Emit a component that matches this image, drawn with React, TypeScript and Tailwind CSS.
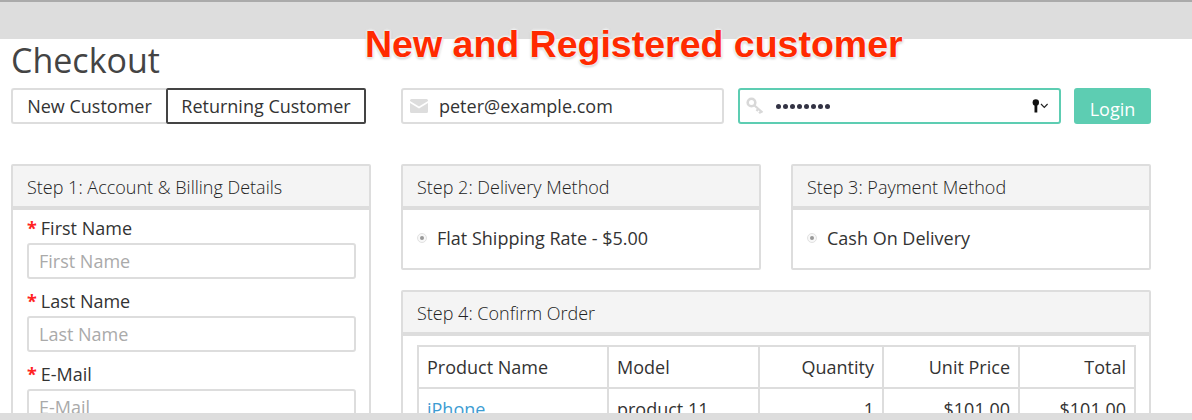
import React from "react";

function Panel({ title, children, className = "" }: { title: string; children: React.ReactNode; className?: string }) {
  return (
    <div className={`border-2 border-[#dddddd] rounded-[2px] ${className}`}>
      <div className="h-[44px] bg-[#f4f4f4] border-b-[4px] border-[#dddddd] pl-[14px] pt-[2px] flex items-center text-[18px] font-light text-[#222222] leading-none">
        {title}
      </div>
      {children}
    </div>
  );
}

function Field({ label }: { label: string }) {
  return (
    <div className="mb-[9px]">
      <div className="h-[26px] flex items-center text-[18px] text-[#333333] leading-none">
        <span className="text-[#ff2222] font-bold mr-[4px] text-[18px]">*</span>
        {label}
      </div>
      <div className="mt-[2px] h-[36px] border-2 border-[#dddddd] rounded-[3px] pl-[10px] flex items-center text-[18px] text-[#aaaaaa]">
        {label}
      </div>
    </div>
  );
}

function Radio() {
  return (
    <span className="w-[10px] h-[10px] rounded-full border border-[#e2e2e2] bg-[#f8f8f8] flex items-center justify-center mr-[10px]">
      <span className="w-[4px] h-[4px] rounded-full bg-[#999999]" />
    </span>
  );
}

function KeyIcon() {
  return (
    <svg width="18" height="18" viewBox="0 0 18 18" fill="none" stroke="#d8d8d8">
      <circle cx="5.5" cy="5.5" r="3.8" strokeWidth="2.6" />
      <path d="M8.5 8.5 L16.5 15.5 M12.2 11.8 L10.5 14 M15 14.2 L13.2 16.4" strokeWidth="2.2" />
    </svg>
  );
}

function Mail() {
  return (
    <svg width="18" height="14" viewBox="0 0 18 14">
      <path d="M1.5 0H16.5A1.5 1.5 0 0 1 18 1.5V2L9 7.5 0 2V1.5A1.5 1.5 0 0 1 1.5 0Z" fill="#dddddd" />
      <path d="M0 4L9 9.5 18 4V12.5A1.5 1.5 0 0 1 16.5 14H1.5A1.5 1.5 0 0 1 0 12.5Z" fill="#dddddd" />
    </svg>
  );
}

const th = "border-2 border-[#dddddd] h-[42px] px-[8px] font-normal text-[18px] text-[#333333]";
const td = "border-2 border-[#dddddd] h-[42px] px-[8px] text-[18px] text-[#333333]";

export default function App() {
  return (
    <div className="relative w-[1192px] h-[420px] overflow-hidden bg-white font-['Open_Sans','Liberation_Sans',sans-serif]">
      <div className="h-[39px] bg-[#dddddd] border-t-2 border-[#aaaaaa]" />

      <div className="pl-[11px] pr-[41px]">
        <h1 className="h-[49px] text-[34px] leading-[42px] text-[#444444] font-normal">Checkout</h1>

        <div className="flex h-[36px] items-stretch">
          <div className="flex w-[355px] text-[18px] text-[#333333]">
            <div className="w-[155px] border-2 border-r-0 border-[#dddddd] rounded-l-[3px] flex items-center justify-center">New Customer</div>
            <div className="flex-1 border-2 border-[#444444] rounded-[2px] flex items-center justify-center">Returning Customer</div>
          </div>
          <div className="ml-[35px] w-[323px] border-2 border-[#dddddd] rounded-[3px] flex items-center pl-[7px] text-[18px] text-[#333333]">
            <Mail />
            <span className="ml-[11px]">peter@example.com</span>
          </div>
          <div className="ml-[14px] w-[323px] border-2 border-[#5dcdb2] rounded-[3px] flex items-center pl-[6px] pr-[10px]">
            <KeyIcon />
            <span className="ml-[12px] flex gap-[2px]">
              {Array.from({ length: 8 }).map((_, i) => (
                <span key={i} className="w-[5px] h-[5px] rounded-full bg-[#333344] block" />
              ))}
            </span>
            <svg className="ml-auto" width="17" height="14" viewBox="0 0 17 14">
              <circle cx="3.8" cy="3.5" r="3.2" fill="#111111" />
              <rect x="2.5" y="4" width="2.8" height="9.5" fill="#111111" />
              <path d="M9 5 L12.3 8.3 L15.6 5" stroke="#222222" strokeWidth="1.2" fill="none" />
            </svg>
          </div>
          <div className="ml-[13px] w-[77px] bg-[#5dcdb2] rounded-[3px] flex items-end justify-center pb-[1px] text-[18px] text-white">Login</div>
        </div>

        <div className="mt-[40px] flex gap-[30px]">
          <div className="w-[360px] shrink-0">
            <Panel title="Step 1: Account & Billing Details" className="h-[300px]">
              <div className="pl-[14px] pr-[13px] pt-[5px]">
                <Field label="First Name" />
                <Field label="Last Name" />
                <Field label="E-Mail" />
              </div>
            </Panel>
          </div>

          <div className="w-[750px] shrink-0 flex flex-col gap-[20px]">
            <div className="flex gap-[30px]">
              <Panel title="Step 2: Delivery Method" className="flex-1 h-[106px]">
                <div className="h-[56px] pl-[14px] flex items-center text-[18px] text-[#333333]">
                  <Radio />
                  Flat Shipping Rate - $5.00
                </div>
              </Panel>
              <Panel title="Step 3: Payment Method" className="flex-1 h-[106px]">
                <div className="h-[56px] pl-[14px] flex items-center text-[18px] text-[#333333]">
                  <Radio />
                  Cash On Delivery
                </div>
              </Panel>
            </div>

            <Panel title="Step 4: Confirm Order">
              <div className="pl-[14px] pt-[9px]">
                <table className="w-[717px] border-collapse table-fixed">
                  <colgroup>
                    <col className="w-[190px]" />
                    <col className="w-[151px]" />
                    <col className="w-[124px]" />
                    <col className="w-[136px]" />
                    <col className="w-[116px]" />
                  </colgroup>
                  <thead>
                    <tr>
                      <th className={`${th} text-left`}>Product Name</th>
                      <th className={`${th} text-left`}>Model</th>
                      <th className={`${th} text-right`}>Quantity</th>
                      <th className={`${th} text-right`}>Unit Price</th>
                      <th className={`${th} text-right`}>Total</th>
                    </tr>
                  </thead>
                  <tbody>
                    <tr>
                      <td className={td}><a className="text-[#3d9cd2]">iPhone</a></td>
                      <td className={td}>product 11</td>
                      <td className={`${td} text-right`}>1</td>
                      <td className={`${td} text-right`}>$101.00</td>
                      <td className={`${td} text-right`}>$101.00</td>
                    </tr>
                  </tbody>
                </table>
              </div>
            </Panel>
          </div>
        </div>
      </div>

      <div className="absolute left-0 right-0 bottom-0 h-[7px] bg-[#dddddd]" />
      <div className="absolute left-[365px] top-[21px] text-[37.5px] leading-[46px] font-bold text-[#ff2a00] font-['Liberation_Sans',sans-serif] whitespace-nowrap [text-shadow:0_0_3px_#fff,0_0_3px_#fff,0_0_3px_#fff,0_1px_3px_rgba(0,0,0,0.5)]">
        New and Registered customer
      </div>
    </div>
  );
}
